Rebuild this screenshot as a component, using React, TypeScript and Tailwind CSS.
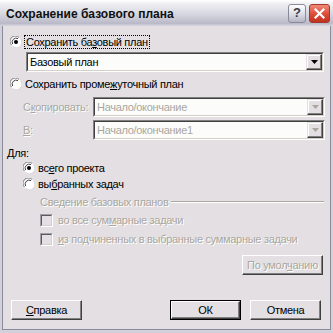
import React from "react";

const font = "font-['Liberation_Sans',Arial,sans-serif]";

function Radio({ checked }: { checked?: boolean }) {
  return (
    <svg width="12" height="12" viewBox="0 0 12 12" className="shrink-0">
      <circle cx="6" cy="6" r="5.5" fill="#ffffff" />
      <path d="M1.5 9 A5.2 5.2 0 0 1 9 1.5" stroke="#808080" strokeWidth="1" fill="none" />
      <path d="M2.6 8 A4 4 0 0 1 8 2.6" stroke="#404040" strokeWidth="1" fill="none" />
      <path d="M10.5 3 A5.2 5.2 0 0 1 3 10.5" stroke="#d8d6de" strokeWidth="1" fill="none" />
      {checked && <circle cx="6" cy="6" r="2" fill="#000000" />}
    </svg>
  );
}

function Check() {
  return (
    <div className="w-[13px] h-[13px] shrink-0 border border-t-[#a09ea6] border-l-[#a09ea6] border-r-white border-b-white">
      <div className="w-full h-full border border-t-[#5a5a60] border-l-[#5a5a60] border-r-[#d4d0c8] border-b-[#d4d0c8] bg-[#e3dfe3]" />
    </div>
  );
}

function Combo({ text, disabled, w }: { text: string; disabled?: boolean; w: string }) {
  return (
    <div className={`${w} h-[20px] border border-t-[#808080] border-l-[#808080] border-r-white border-b-white`}>
      <div className="h-full flex border border-t-[#404040] border-l-[#404040] border-r-[#d4d0c8] border-b-[#d4d0c8] bg-[#fcfcfa]">
        <div className={`flex-1 pl-[2px] leading-[16px] ${disabled ? "text-[#a9a7a0]" : "text-black"}`}>{text}</div>
        <div className="w-[16px] h-[16px] border border-t-[#e3dfe3] border-l-[#e3dfe3] border-r-[#404040] border-b-[#404040] bg-[#e3dfe3] flex items-center justify-center shadow-[inset_-1px_-1px_0_#808080,inset_1px_1px_0_#ffffff]">
          <svg width="7" height="4" viewBox="0 0 7 4">
            <path d="M0 0 H7 L3.5 4 Z" fill={disabled ? "#a9a7a0" : "#000000"} />
          </svg>
        </div>
      </div>
    </div>
  );
}

function Button({ children, def, disabled, w = "w-[71px]" }: { children: React.ReactNode; def?: boolean; disabled?: boolean; w?: string }) {
  return (
    <div className={`${w} h-[20px] ${def ? "border border-black" : ""}`}>
      <div className="h-full border border-t-white border-l-white border-r-[#404040] border-b-[#404040] bg-[#e3dfe3] shadow-[inset_-1px_-1px_0_#808080] flex items-center justify-center">
        <span className={disabled ? "text-[#a9a7a0] [text-shadow:1px_1px_0_#ffffff]" : "text-black"}>{children}</span>
      </div>
    </div>
  );
}

const dis = "text-[#a9a7a0] [text-shadow:1px_1px_0_#ffffff]";

export default function App() {
  return (
    <div className={`w-[333px] h-[333px] flex flex-col bg-[#d2d1da] ${font} text-[11px] tracking-[-0.3px] text-black overflow-hidden`}>
      {/* title bar */}
      <div className="h-[26px] shrink-0 flex items-center pl-[6px] pr-[3px] bg-[linear-gradient(to_bottom,#ffffff_0%,#eeeef3_15%,#dcdce5_45%,#c7c7d3_75%,#b9b9c8_90%,#d9d8e0_100%)]">
        <div className="flex-1 text-[12px] font-bold tracking-normal text-[#101010] leading-none pt-[2px]">Сохранение базового плана</div>
        <div className="w-[18px] h-[19px] rounded-[3px] border border-[#8a8a99] bg-[linear-gradient(to_bottom,#ffffff,#d8d8e2_60%,#b4b4c4)] flex items-center justify-center text-[13px] font-bold tracking-normal text-[#3a3a48] mr-[3px]">?</div>
        <div className="w-[21px] h-[19px] rounded-[3px] border border-[#a03a2a] bg-[linear-gradient(to_bottom,#f08a78,#dc4b36_55%,#c2311e)] flex items-center justify-center">
          <svg width="11" height="11" viewBox="0 0 11 11">
            <path d="M1.5 1.5 L9.5 9.5 M9.5 1.5 L1.5 9.5" stroke="#ffffff" strokeWidth="2.2" strokeLinecap="square" />
          </svg>
        </div>
      </div>

      {/* body */}
      <div className="flex-1 mx-[2px] mb-[3px] border-x border-b border-[#8a8a9a] bg-[#e3dfe3] flex flex-col">
        <div className="mt-[9px] h-[14px] flex items-center pl-[7px]">
          <Radio checked />
          <span className="ml-[2px] px-[1px] border border-dotted border-black leading-[12px]">Сохранить ба<u>з</u>овый план</span>
        </div>
        <div className="mt-[3px] pl-[23px]">
          <Combo text="Базовый план" w="w-[298px]" />
        </div>

        <div className="mt-[5px] h-[14px] flex items-center pl-[7px]">
          <Radio />
          <span className="ml-[3px]">Сохранить проме<u>ж</u>уточный план</span>
        </div>

        <div className="mt-[6px] flex items-center pl-[20px]">
          <span className={`w-[70px] ${dis}`}>С<u>к</u>опировать:</span>
          <Combo text="Начало/окончание" disabled w="w-[232px]" />
        </div>
        <div className="mt-[3px] flex items-center pl-[20px]">
          <span className={`w-[70px] ${dis}`}><u>В</u>:</span>
          <Combo text="Начало/окончание1" disabled w="w-[232px]" />
        </div>

        <div className="mt-[6px] h-[14px] flex items-center pl-[4px]">Для:</div>
        <div className="mt-[1px] h-[14px] flex items-center pl-[20px]">
          <Radio checked />
          <span className="ml-[3px]">вс<u>е</u>го проекта</span>
        </div>
        <div className="mt-[2px] h-[14px] flex items-center pl-[20px]">
          <Radio />
          <span className="ml-[3px]">вы<u>б</u>ранных задач</span>
        </div>

        <div className="mt-[4px] h-[14px] flex items-center pl-[37px] pr-[6px]">
          <span className={dis}>Сведение базовых планов</span>
          <div className="flex-1 ml-[3px] h-[2px] border-t border-t-[#a9a7a0] border-b border-b-white" />
        </div>
        <div className="mt-[4px] h-[14px] flex items-center pl-[37px]">
          <Check />
          <span className={`ml-[5px] ${dis}`}>во все сум<u>м</u>арные задачи</span>
        </div>
        <div className="mt-[5px] h-[14px] flex items-center pl-[37px]">
          <Check />
          <span className={`ml-[5px] ${dis}`}><u>и</u>з подчиненных в выбранные суммарные задачи</span>
        </div>

        <div className="mt-[9px] flex justify-end pr-[7px]">
          <Button disabled w="w-[81px]">По умол<u>ч</u>анию</Button>
        </div>

        <div className="mt-[25px] flex pl-[8px] pr-[9px]">
          <Button>
            <u>С</u>правка
          </Button>
          <div className="flex-1" />
          <Button def>ОК</Button>
          <div className="w-[9px]" />
          <Button>Отмена</Button>
        </div>
      </div>
    </div>
  );
}
